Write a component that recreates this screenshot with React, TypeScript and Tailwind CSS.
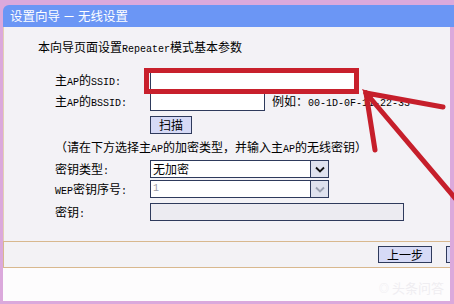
import React from 'react'

// ASCII runs look like the narrow SimSun latin in the shot, so give them a mono face
function Mix({ s }: { s: string }) {
  return (
    <>
      {s.split(/([\x20-\x7e]+)/).map((p, i) =>
        /^[\x20-\x7e]+$/.test(p) ? (
          <span key={i} className="font-['Liberation_Mono',monospace] text-[10px]">{p}</span>
        ) : (
          <React.Fragment key={i}>{p}</React.Fragment>
        )
      )}
    </>
  )
}

function Label({ text }: { text: string }) {
  return <div className="w-[95px] shrink-0 whitespace-nowrap"><Mix s={text} /></div>
}

function Chevron({ muted }: { muted?: boolean }) {
  return (
    <svg width="10" height="7" viewBox="0 0 10 7">
      <path d="M1 1.5 L5 5.5 L9 1.5" fill="none" stroke={muted ? '#9aa0b0' : '#111'} strokeWidth="1.8" />
    </svg>
  )
}

function Select({ value, disabled }: { value: string; disabled?: boolean }) {
  return (
    <div className="flex h-[18px] w-[179px] border border-[#2e3a5c] bg-white">
      <div className={`flex-1 pl-[2px] leading-[16px] ${disabled ? "text-[#9a9aa6] font-['Liberation_Mono',monospace] text-[10px]" : ''}`}>{value}</div>
      <div className="flex w-[18px] items-center justify-center border-l border-[#2e3a5c] bg-[#dfe2ee]">
        <Chevron muted={disabled} />
      </div>
    </div>
  )
}

export default function App() {
  return (
    <div className="relative h-[304px] w-[454px] overflow-hidden bg-[#dba9dc] pb-[3px] pl-[3px] pr-[4px] pt-[5px] font-['Noto_Sans_CJK_SC',sans-serif] text-[12px] text-black">
      <div className="flex h-full flex-col">
        <div className="mr-[-4px] flex h-[22px] shrink-0 items-center rounded-tl-[6px] bg-[#6b96f5] pl-[7px] text-[12.5px] text-white">
          设置向导 － 无线设置
        </div>

        <div className="flex h-[214px] shrink-0 flex-col border-l border-[#e3cfb4] bg-[#f3f2f6]">
          <div className="pl-[34px] pt-[12px] leading-[16px]">
            <Mix s="本向导页面设置Repeater模式基本参数" />
          </div>

          <div className="mt-[13px] flex flex-col pl-[51px]">
            <div className="flex h-[19px] items-center">
              <Label text="主AP的SSID:" />
              <div className="relative h-[19px] w-[205px] border border-[#2e3a5c] bg-white">
                <div className="absolute left-[-7px] top-[-4px] h-[26px] w-[215px] border-[5px] border-[#c8202c]" />
              </div>
            </div>

            <div className="mt-[2px] flex h-[19px] items-center">
              <Label text="主AP的BSSID:" />
              <div className="h-[19px] w-[115px] border border-[#2e3a5c] bg-white" />
              <div className="ml-[7px] whitespace-nowrap"><Mix s="例如：00-1D-0F-11-22-33" /></div>
            </div>

            <div className="mt-[5px] flex h-[18px] items-center pl-[95px]">
              <button className="h-[18px] w-[42px] border border-[#2e3a5c] bg-[#d6daf6] leading-[16px]">扫描</button>
            </div>

            <div className="mt-[5px] h-[16px] whitespace-nowrap leading-[16px]">
              <Mix s="（请在下方选择主AP的加密类型，并输入主AP的无线密钥）" />
            </div>

            <div className="mt-[5px] flex h-[18px] items-center">
              <Label text="密钥类型:" />
              <Select value="无加密" />
            </div>

            <div className="mt-[2px] flex h-[18px] items-center">
              <Label text="WEP密钥序号:" />
              <Select value="1" disabled />
            </div>

            <div className="mt-[5px] flex h-[18px] items-center">
              <Label text="密钥:" />
              <div className="h-[18px] w-[254px] border border-[#2e3a5c] bg-[#ecebf1]" />
            </div>
          </div>
        </div>

        <div className="flex h-[27px] shrink-0 items-center gap-[14px] overflow-hidden border-y border-l border-[#d8b88e] bg-[#f3f2f5] pl-[374px]">
          <button className="h-[17px] w-[54px] shrink-0 border border-[#2e3a5c] bg-[#d6daf6] leading-[15px]">上一步</button>
          {/* next button is cut off by the frame edge in the shot */}
          <div className="h-[17px] w-[54px] shrink-0 border border-[#2e3a5c] bg-[#d6daf6]" />
        </div>

        <div className="flex flex-1 items-end justify-end bg-[#fdfcfd] pb-[4px] pr-[6px]">
          <div className="flex items-center gap-[3px] text-[13px] text-[#efedf1]">
            <span className="text-[10px]">◎</span>头条问答
          </div>
        </div>
      </div>

      <svg className="pointer-events-none absolute left-0 top-0" width="454" height="304" viewBox="0 0 454 304">
        <g stroke="#c61f2b" strokeWidth="5" strokeLinecap="round" fill="none">
          <line x1="366" y1="93" x2="460" y2="204" />
          <line x1="366" y1="93" x2="443" y2="107" />
          <line x1="366" y1="93" x2="375" y2="150" />
        </g>
        <path d="M362 89 L376 94 L368 102 Z" fill="#c61f2b" />
      </svg>
    </div>
  )
}
